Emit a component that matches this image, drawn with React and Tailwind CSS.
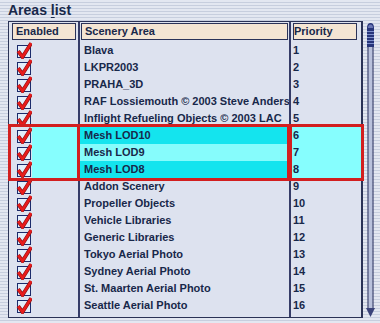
import React from 'react';

const areas = [
  'Blava',
  'LKPR2003',
  'PRAHA_3D',
  'RAF Lossiemouth © 2003 Steve Anderson',
  'Inflight Refueling Objects © 2003 LAC',
  'Mesh LOD10',
  'Mesh LOD9',
  'Mesh LOD8',
  'Addon Scenery',
  'Propeller Objects',
  'Vehicle Libraries',
  'Generic Libraries',
  'Tokyo Aerial Photo',
  'Sydney Aerial Photo',
  'St. Maarten Aerial Photo',
  'Seattle Aerial Photo',
];

// rows 6-8 are the selected block
const SEL_START = 5;
const SEL_END = 8;

const Check = () => (
  <svg width="16" height="17" viewBox="0 0 16 17" className="block">
    <rect x="1.5" y="3.5" width="13" height="12" fill="#e2eefb" stroke="#1c2b6b" />
    <path d="M2.2 9.2 L6.5 15 L15.2 1.2" fill="none" stroke="#8c1212" strokeWidth="3.8" />
    <path d="M2.2 9.2 L6.5 15 L15.2 1.2" fill="none" stroke="#e81c1c" strokeWidth="2.6" />
  </svg>
);

const Header = ({ children, className }) => (
  <div
    className={`mt-[1px] h-[17px] border border-[#2b3358] bg-[#f4e5d3] text-[11px] leading-[15px] whitespace-nowrap ${className}`}
  >
    {children}
  </div>
);

const Scrollbar = () => (
  <svg width="17" height="297" viewBox="0 0 17 297" className="block">
    <rect x="5.5" y="24" width="4" height="263" fill="#b9c1dc" />
    <line x1="5" y1="24" x2="5" y2="288" stroke="#3a416e" strokeWidth="1.2" />
    <line x1="10" y1="24" x2="10" y2="288" stroke="#3a416e" strokeWidth="1.2" />
    <path d="M4 26 L4 7 Q4 2 7.5 2 Q11 2 11 7 L11 26 Z" fill="#27357a" />
    <path d="M5 7 Q5 3.5 7.5 3.5 Q10 3.5 10 7 Z" fill="#6a76b4" />
    <rect x="4" y="10" width="7" height="1" fill="#7d8fcc" />
    <rect x="4" y="13" width="7" height="1" fill="#7d8fcc" />
    <rect x="4" y="16" width="7" height="1" fill="#7d8fcc" />
    <rect x="4" y="19" width="7" height="1" fill="#7d8fcc" />
    <rect x="4" y="22" width="7" height="1" fill="#7d8fcc" />
    <path d="M3 287 L12 287 L7.5 296 Z" fill="#3b437a" />
  </svg>
);

export default function App() {
  const before = areas.slice(0, SEL_START);
  const selected = areas.slice(SEL_START, SEL_END);
  const after = areas.slice(SEL_END);
  const num = (list, offset) => list.map((_, i) => i + 1 + offset);

  return (
    <div className="w-[380px] h-[323px] overflow-hidden bg-[repeating-linear-gradient(to_bottom,#e3e7f1_0px,#e3e7f1_2px,#c7cede_2px,#c7cede_3px)] font-['Liberation_Sans',Arial,sans-serif] font-bold text-[#18284a]">
      {/* title */}
      <div className="h-[21px] pl-[8px] text-[14px] leading-[20px]">
        Areas <span className="underline underline-offset-2">l</span>ist
      </div>

      <div className="flex">
        {/* table panel */}
        <div className="ml-[8px] w-[355px] h-[297px] flex border border-r-2 border-[#2a3256] bg-[#dde2ef]">
          {/* Enabled */}
          <div className="w-[71px] border-r-2 border-[#353c68] flex flex-col">
            <Header className="ml-[3px] mr-[2px] pl-[3px]">Enabled</Header>
            <div className="mt-[2px]">
              {before.map((a) => (
                <div key={a} className="h-[17px] pl-[7px]">
                  <Check />
                </div>
              ))}
              <div className="relative z-10 ml-[2px] flex outline-3 outline-[#d21f1f]">
                <div className="pl-[5px]">
                  {selected.map((a) => (
                    <div key={a} className="h-[17px]">
                      <Check />
                    </div>
                  ))}
                </div>
                <div className="flex-1 bg-[#86fefe]" />
              </div>
              {after.map((a) => (
                <div key={a} className="h-[17px] pl-[7px]">
                  <Check />
                </div>
              ))}
            </div>
          </div>

          {/* Scenery Area */}
          <div className="w-[211px] border-r-2 border-[#353c68] flex flex-col">
            <Header className="ml-[1px] mr-[1px] pl-[3px]">Scenery Area</Header>
            <div className="mt-[2px] text-[11px] leading-[17px]">
              {before.map((a) => (
                <div key={a} className="h-[17px] pl-[4px] pr-[2px] whitespace-nowrap overflow-hidden">
                  {a}
                </div>
              ))}
              <div className="relative z-10 mr-[2px] outline-3 outline-[#d21f1f]">
                {selected.map((a, i) => (
                  <div
                    key={a}
                    className={`h-[17px] pl-[4px] whitespace-nowrap ${i === 1 ? 'bg-[#86fcfc]' : 'bg-[#14e4ee]'}`}
                  >
                    {a}
                  </div>
                ))}
              </div>
              {after.map((a) => (
                <div key={a} className="h-[17px] pl-[4px] pr-[2px] whitespace-nowrap overflow-hidden">
                  {a}
                </div>
              ))}
            </div>
          </div>

          {/* Priority */}
          <div className="flex-1 flex flex-col">
            <Header className="ml-[2px] mr-[4px] pl-0">Priority</Header>
            <div className="mt-[2px] text-[11px] leading-[17px]">
              {num(before, 0).map((n) => (
                <div key={n} className="h-[17px] pl-[2px]">
                  {n}
                </div>
              ))}
              <div className="relative z-10 ml-[1px] bg-[#86fefe] outline-3 outline-[#d21f1f]">
                {num(selected, SEL_START).map((n) => (
                  <div key={n} className="h-[17px] pl-[1px]">
                    {n}
                  </div>
                ))}
              </div>
              {num(after, SEL_END).map((n) => (
                <div key={n} className="h-[17px] pl-[2px]">
                  {n}
                </div>
              ))}
            </div>
          </div>
        </div>

        <Scrollbar />
      </div>
    </div>
  );
}
